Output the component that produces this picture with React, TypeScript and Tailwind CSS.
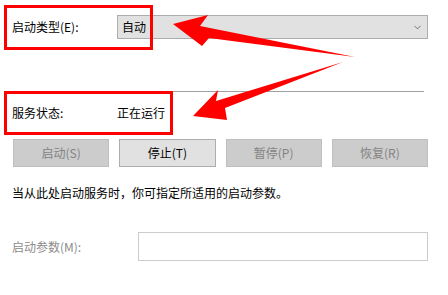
import { ChevronDown } from 'lucide-react'

// Service properties panel (start type / status / controls) with red annotations on top

const buttons = [
  { label: '启动(S)', disabled: true },
  { label: '停止(T)', disabled: false },
  { label: '暂停(P)', disabled: true },
  { label: '恢复(R)', disabled: true },
]

function Annotations() {
  return (
    <>
      <div className="absolute left-[4px] top-[5px] w-[149px] h-[45px] border-[3px] border-[#ff0000]" />
      <div className="absolute left-[4px] top-[91px] w-[169px] h-[44px] border-[3px] border-[#ff0000]" />
      <svg
        className="absolute left-0 top-0 pointer-events-none"
        width="448"
        height="295"
        viewBox="0 0 448 295"
      >
        <polygon
          points="173,24 208,15 200,26 355,57 209,38 202,46"
          fill="#ff0000"
        />
        <polygon
          points="343,62 216,101 218,90 193,116 227,120 225,108"
          fill="#ff0000"
        />
      </svg>
    </>
  )
}

export default function App() {
  return (
    <div
      className="relative w-[448px] h-[295px] overflow-hidden bg-white pl-3 pr-5 text-[12px] leading-4 text-black"
      style={{ fontFamily: '"Noto Sans CJK SC", "Noto Sans", sans-serif' }}
    >
      {/* Start type */}
      <div className="flex items-center h-[24px] mt-[15px]">
        <span className="w-[105px] shrink-0">启动类型(E):</span>
        <div className="flex-1 h-full flex items-center justify-between pl-[4px] pr-[4px] bg-[#e1e1e1] border border-[#adadad]">
          <span>自动</span>
          <ChevronDown className="w-[11px] h-[11px] text-[#444]" strokeWidth={1.5} />
        </div>
      </div>

      <div className="h-px bg-[#a0a0a0] mt-[52px] mr-[4px]" />

      {/* Status */}
      <div className="flex items-center h-4 mt-[13px]">
        <span className="w-[105px] shrink-0">服务状态:</span>
        <span>正在运行</span>
      </div>

      {/* Control buttons */}
      <div className="grid grid-cols-4 gap-[10px] ml-px mt-[18px]">
        {buttons.map((b) => (
          <div
            key={b.label}
            className={`h-[28px] flex items-center justify-center border ${
              b.disabled
                ? 'bg-[#cccccc] border-[#bfbfbf] text-[#838383]'
                : 'bg-[#e1e1e1] border-[#adadad] text-black'
            }`}
          >
            {b.label}
          </div>
        ))}
      </div>

      <p className="mt-[18px]">当从此处启动服务时，你可指定所适用的启动参数。</p>

      {/* Start parameters */}
      <div className="flex items-center mt-[31px]">
        <span className="w-[126px] shrink-0 text-[#8c8c8c]">启动参数(M):</span>
        <div className="flex-1 h-[29px] border border-[#cccccc] bg-white" />
      </div>

      <Annotations />
    </div>
  )
}
